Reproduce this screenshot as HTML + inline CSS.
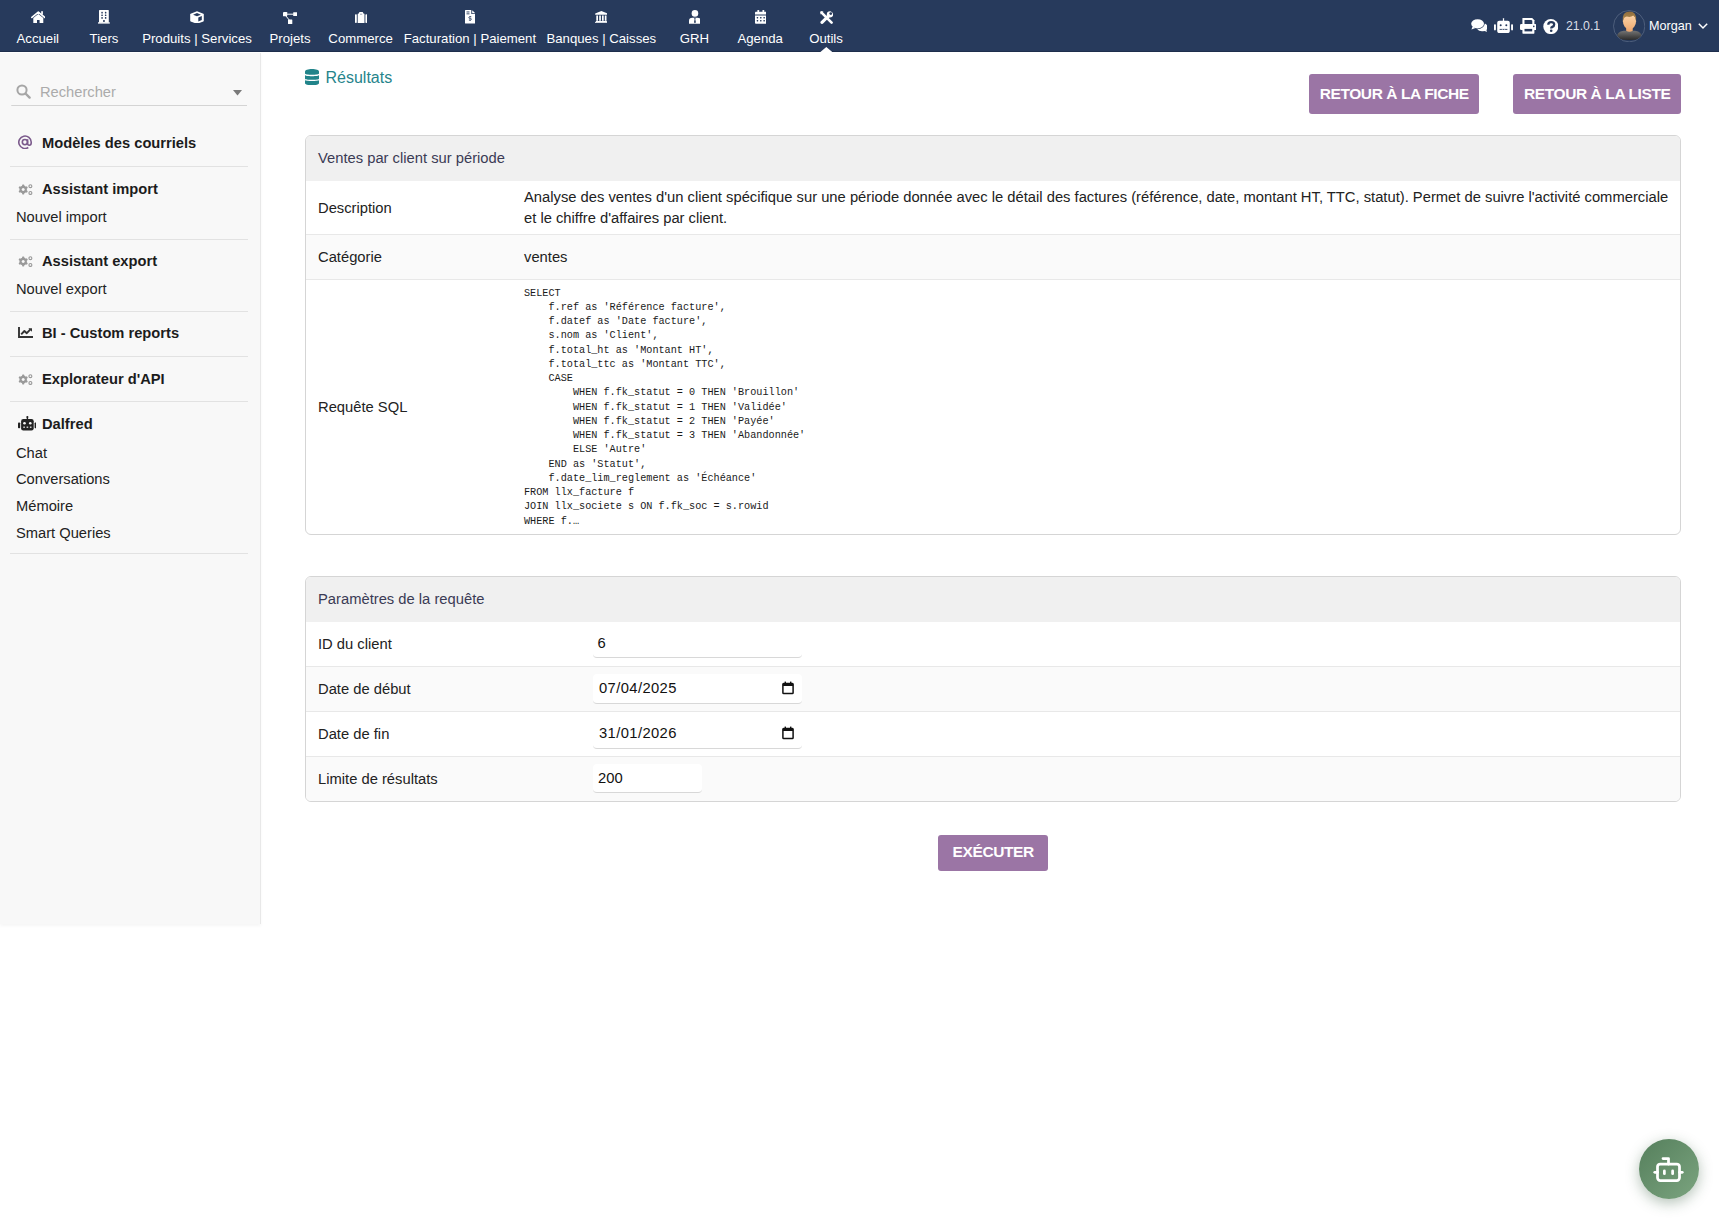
<!DOCTYPE html>
<html><head><meta charset="utf-8">
<style>
*{box-sizing:border-box;margin:0;padding:0}
html,body{width:1719px;height:1219px;overflow:hidden;background:#fff;font-family:"Liberation Sans",sans-serif;color:#222}
.abs{position:absolute}
#nav{position:absolute;left:0;top:0;width:1719px;height:52px;background:rgb(39,58,92);border-bottom:1px solid rgb(30,46,76)}
.nl{position:absolute;top:31px;transform:translateX(-50%);color:#fff;font-size:13.2px;white-space:nowrap;line-height:16px}
.mi{position:absolute;top:0;height:52px;color:#fff;font-size:13.2px;white-space:nowrap}
.mi .lb{position:absolute;top:31px;left:0;line-height:15px}
.mi svg{position:absolute;top:10px;fill:#fff}
#side{position:absolute;left:0;top:53px;width:261px;height:871px;background:#f8f8f8;border-right:1px solid #e8e8e8;box-shadow:0 2px 3px rgba(0,0,0,0.04)}
.sep{position:absolute;left:10px;width:238px;height:1px;background:#e2e2e2}
.st{position:absolute;left:42px;font-size:14.7px;font-weight:bold;color:#1c1c1c;white-space:nowrap;line-height:17px}
.ss{position:absolute;left:16px;font-size:14.7px;color:#222;white-space:nowrap;line-height:17px}
.tbl{position:absolute;left:305px;width:1376px;border:1px solid #d6d6d6;border-radius:6px;overflow:hidden}
.row{position:absolute;left:0;width:1374px;border-top:1px solid #e8e8e8}
.hd{position:absolute;left:0;top:0;width:1374px;background:#f0f0f0;color:#3b3b52;font-size:14.6px}
.txt{position:absolute;font-size:14.75px;white-space:nowrap;line-height:17px}
.btn{position:absolute;background:rgb(155,117,165);color:#fff;font-weight:bold;font-size:15.5px;letter-spacing:-0.4px;text-indent:0.4px;border-radius:3px;text-align:center;white-space:nowrap}
.inp{position:absolute;background:#fff;border-bottom:1px solid #d8d8d8;border-radius:4px}
pre{font-family:"Liberation Mono",monospace}
</style></head><body>
<div id="nav"><svg class="abs" style="left:30.8px;top:11px" width="14.6" height="12" viewBox="0 0 14.6 12"><polyline points="0.9,6.4 7.3,1.1 13.7,6.4" fill="none" stroke="#fff" stroke-width="1.7" stroke-linecap="round" stroke-linejoin="round"/><rect x="10.2" y="0.2" width="1.7" height="3.4" fill="#fff"/><path d="M2.3 7 L7.3 3 L12.3 7 V12 H8.6 V8.9 H6 V12 H2.3 Z" fill="#fff"/></svg><svg class="abs" style="left:98px;top:10.2px" width="11.8" height="13.6" viewBox="0 0 11.8 13.6"><rect x="1" y="0" width="9.8" height="12.8" rx="0.6" fill="#fff"/><rect x="0" y="12.3" width="11.8" height="1.3" fill="#fff"/><rect x="3.3" y="1.7" width="1.5" height="1.7" rx="0.5" fill="rgb(39,58,92)"/><rect x="3.3" y="4.4" width="1.5" height="1.7" rx="0.5" fill="rgb(39,58,92)"/><rect x="3.3" y="7.0" width="1.5" height="1.7" rx="0.5" fill="rgb(39,58,92)"/><rect x="6.9" y="1.7" width="1.5" height="1.7" rx="0.5" fill="rgb(39,58,92)"/><rect x="6.9" y="4.4" width="1.5" height="1.7" rx="0.5" fill="rgb(39,58,92)"/><rect x="6.9" y="7.0" width="1.5" height="1.7" rx="0.5" fill="rgb(39,58,92)"/><rect x="5.2" y="10" width="1.5" height="2" fill="rgb(39,58,92)"/></svg><svg class="abs" style="left:190.1px;top:10.6px" width="14" height="12.9" viewBox="0 0 14 12.9"><path d="M7 0.2 L13.4 2.8 Q13.8 3 13.8 3.4 V9.8 Q13.8 10.2 13.4 10.4 L7 12.9 L0.6 10.4 Q0.2 10.2 0.2 9.8 V3.4 Q0.2 3 0.6 2.8 Z" fill="#fff"/><path d="M7 2.1 L10.9 3.7 L7 5.3 L3.1 3.7 Z" fill="rgb(39,58,92)"/><path d="M8.3 6.6 L11.8 5.1 V9.1 L8.3 10.6 Z" fill="rgb(39,58,92)"/></svg><svg class="abs" style="left:283.1px;top:11.8px" width="14.4" height="11.9" viewBox="0 0 14.4 11.9"><rect x="0" y="0" width="4.2" height="4.2" rx="0.5" fill="#fff"/><rect x="10.2" y="0.3" width="4.2" height="3.7" rx="0.5" fill="#fff"/><rect x="5" y="7.5" width="4.3" height="4.4" rx="0.5" fill="#fff"/><path d="M3.5 2.2 H10.6 M2.6 3.6 L6.4 8.2" stroke="#fff" stroke-width="1"/></svg><svg class="abs" style="left:354.8px;top:11.9px" width="12.2" height="11" viewBox="0 0 12.2 11"><rect x="0" y="2.3" width="1.8" height="8.7" rx="0.7" fill="#fff"/><rect x="10.4" y="2.3" width="1.8" height="8.7" rx="0.7" fill="#fff"/><path d="M2.7 2.2 Q2.7 1.6 3.3 1.6 H4 V0.9 Q4 0 4.9 0 H7.3 Q8.2 0 8.2 0.9 V1.6 H8.9 Q9.5 1.6 9.5 2.2 V11 H2.7 Z" fill="#fff"/><rect x="5" y="1.8" width="2.2" height="0.7" fill="rgb(39,58,92)" opacity="0.6"/></svg><svg class="abs" style="left:464.7px;top:10.3px" width="10.4" height="13.6" viewBox="0 0 10.4 13.6"><path d="M0.6 0 H6.3 V4.1 H10.4 V13 Q10.4 13.6 9.8 13.6 H0.6 Q0 13.6 0 13 V0.6 Q0 0 0.6 0 Z" fill="#fff"/><path d="M7.2 0.3 L10.1 3.2 H7.2 Z" fill="#fff"/><rect x="1.5" y="1.5" width="3" height="0.9" fill="rgb(39,58,92)"/><rect x="1.5" y="3.4" width="3" height="0.9" fill="rgb(39,58,92)"/><path d="M6.3 6.8 H4.6 Q3.9 6.8 3.9 7.6 Q3.9 8.4 4.6 8.4 H5.6 Q6.3 8.4 6.3 9.2 Q6.3 10 5.6 10 H3.9 M5.1 6 V6.8 M5.1 10 V10.9" fill="none" stroke="rgb(39,58,92)" stroke-width="0.9"/></svg><svg class="abs" style="left:594.8px;top:10.9px" width="12.7" height="12.3" viewBox="0 0 12.7 12.3"><path d="M6.35 0 L12.5 2.5 V3.7 H0.2 V2.5 Z" fill="#fff"/><rect x="1.3" y="4.5" width="1.7" height="5.3" fill="#fff"/><rect x="4.2" y="4.5" width="1.7" height="5.3" fill="#fff"/><rect x="7.0" y="4.5" width="1.7" height="5.3" fill="#fff"/><rect x="9.8" y="4.5" width="1.7" height="5.3" fill="#fff"/><rect x="0.8" y="10" width="11.1" height="1" fill="#fff"/><rect x="0" y="11.2" width="12.7" height="1.1" fill="#fff"/></svg><svg class="abs" style="left:688.5px;top:10.1px" width="11.9" height="13.8" viewBox="0 0 11.9 13.8"><circle cx="5.95" cy="3.4" r="3.3" fill="#fff"/><path d="M0 13.8 V11 Q0 7.7 3.3 7.7 H8.6 Q11.9 7.7 11.9 11 V13.8 Z" fill="#fff"/><path d="M5.2 8.1 H6.7 L6.3 9.2 L6.9 12.3 L5.95 13.2 L5 12.3 L5.6 9.2 Z" fill="rgb(39,58,92)"/></svg><svg class="abs" style="left:754.6px;top:10.2px" width="11.6" height="13.7" viewBox="0 0 11.6 13.7"><rect x="2.4" y="0" width="1.7" height="2.8" rx="0.5" fill="#fff"/><rect x="7.5" y="0" width="1.7" height="2.8" rx="0.5" fill="#fff"/><path d="M0 2.6 Q0 1.7 0.9 1.7 H10.7 Q11.6 1.7 11.6 2.6 V4.6 H0 Z" fill="#fff"/><path d="M0 5.5 H11.6 V12.8 Q11.6 13.7 10.7 13.7 H0.9 Q0 13.7 0 12.8 Z" fill="#fff"/><rect x="1.7" y="6.9" width="1.5" height="1.5" rx="0.4" fill="rgb(39,58,92)"/><rect x="1.7" y="9.9" width="1.5" height="1.5" rx="0.4" fill="rgb(39,58,92)"/><rect x="5.05" y="6.9" width="1.5" height="1.5" rx="0.4" fill="rgb(39,58,92)"/><rect x="5.05" y="9.9" width="1.5" height="1.5" rx="0.4" fill="rgb(39,58,92)"/><rect x="8.4" y="6.9" width="1.5" height="1.5" rx="0.4" fill="rgb(39,58,92)"/><rect x="8.4" y="9.9" width="1.5" height="1.5" rx="0.4" fill="rgb(39,58,92)"/></svg><svg class="abs" style="left:819.8px;top:10.5px" width="13.3" height="13.4" viewBox="0 0 13.3 13.4"><path d="M1.6 1.6 L11.6 11.6" stroke="#fff" stroke-width="2.6" stroke-linecap="round"/><path d="M2 11.4 L8.6 4.8" stroke="#fff" stroke-width="3.1" stroke-linecap="round"/><circle cx="10" cy="3.4" r="3.2" fill="#fff"/><circle cx="10.8" cy="2.6" r="1.4" fill="rgb(39,58,92)"/><path d="M10.8 0 L13.5 0 L13.5 2.6 Z" fill="rgb(39,58,92)"/><path d="M0.5 0.3 L3.5 0.6 L0.6 3.4 Z" fill="#fff"/></svg><div class="abs nl" style="left:37.75px">Accueil</div><div class="abs nl" style="left:104px">Tiers</div><div class="abs nl" style="left:197px">Produits | Services</div><div class="abs nl" style="left:290px">Projets</div><div class="abs nl" style="left:360.6px">Commerce</div><div class="abs nl" style="left:469.9px">Facturation | Paiement</div><div class="abs nl" style="left:601.3px">Banques | Caisses</div><div class="abs nl" style="left:694.4px">GRH</div><div class="abs nl" style="left:760.2px">Agenda</div><div class="abs nl" style="left:826px">Outils</div><svg class="abs" style="left:819.7px;top:46.8px" width="12.6" height="5.3" viewBox="0 0 12.6 5.3"><path d="M0 5.3 L6.3 0 L12.6 5.3 Z" fill="#fff"/></svg>
<svg class="abs" style="left:1470.8px;top:18.7px" width="16.6" height="13" viewBox="0 0 16.6 13"><ellipse cx="6.6" cy="4.8" rx="6.4" ry="4.6" fill="#fff"/><path d="M1.6 7.5 L0.4 10.4 L4.6 8.9 Z" fill="#fff"/><path d="M13.9 4.6 Q16.6 5.8 16.6 8.2 Q16.6 9.8 15.3 10.9 L16.4 13 L13.2 12 Q12.2 12.3 11 12.3 Q7.8 12.3 6.2 10.2 Q12.9 9.9 13.9 4.6 Z" fill="#fff"/></svg>
<svg class="abs" style="left:1494px;top:18.2px" width="19" height="15.1" viewBox="0 0 19 15.1"><path d="M8.8 3.2 L9 0.4 Q9.5 -0.2 10 0.4 L10.2 3.2 Z" fill="#fff"/><rect x="3.2" y="2.8" width="12.6" height="12.3" rx="2" fill="#fff"/><rect x="0" y="6.2" width="1.9" height="6.2" rx="0.8" fill="#fff"/><rect x="17.1" y="6.2" width="1.9" height="6.2" rx="0.8" fill="#fff"/><circle cx="6.7" cy="7.2" r="1.0" fill="rgb(39,58,92)"/><circle cx="12.3" cy="7.2" r="1.0" fill="rgb(39,58,92)"/><rect x="5.6" y="10.9" width="7.8" height="0.9" fill="rgb(39,58,92)"/><rect x="7.9" y="10.7" width="0.6" height="1.3" fill="#fff"/><rect x="10.5" y="10.7" width="0.6" height="1.3" fill="#fff"/></svg>
<svg class="abs" style="left:1519.5px;top:18.3px" width="16.5" height="15.7" viewBox="0 0 16.5 15.7"><path d="M3 0 H12.2 L14.4 2.2 V6.4 H2.4 V0.6 Q2.4 0 3 0 Z" fill="#fff"/><path d="M4.5 1.9 H11.4 L12.3 2.8 V6.4 H4.5 Z" fill="rgb(39,58,92)"/><rect x="0" y="6.1" width="16.5" height="6" rx="1.3" fill="#fff"/><rect x="2.4" y="10.4" width="12" height="5.3" rx="0.6" fill="#fff"/><rect x="4.5" y="10.9" width="7.7" height="2.5" fill="rgb(39,58,92)"/><circle cx="13.8" cy="8.4" r="0.8" fill="rgb(39,58,92)"/></svg>
<svg class="abs" style="left:1542.8px;top:18.7px" width="15.7" height="15.1" viewBox="0 0 15.7 15.1"><circle cx="7.85" cy="7.55" r="7.55" fill="#fff"/><path d="M5.3 5.7 Q5.3 3.1 8.2 3.1 Q11.2 3.1 11.2 5.5 Q11.2 7.1 9.4 7.9 Q8.2 8.5 8.2 9.5" fill="none" stroke="rgb(39,58,92)" stroke-width="2.3"/><circle cx="8.2" cy="11.7" r="1.3" fill="rgb(39,58,92)"/></svg>
<div class="abs" style="left:1566px;top:19px;font-size:12.3px;line-height:14px;color:#dcdfe6;white-space:nowrap">21.0.1</div>
<svg class="abs" style="left:1612.5px;top:9.8px" width="32.4" height="32.4" viewBox="0 0 32 32"><defs><linearGradient id="sk" x1="0" y1="0" x2="0" y2="1"><stop offset="0" stop-color="#fdd8ad"/><stop offset="1" stop-color="#efad76"/></linearGradient><linearGradient id="sh" x1="0" y1="0" x2="0" y2="1"><stop offset="0" stop-color="#747474"/><stop offset="1" stop-color="#2c2c2c"/></linearGradient><linearGradient id="hr" x1="0" y1="0" x2="0" y2="1"><stop offset="0" stop-color="#8f6d3c"/><stop offset="1" stop-color="#b48d52"/></linearGradient><clipPath id="cc"><circle cx="16" cy="16" r="15.2"/></clipPath></defs><circle cx="16" cy="16" r="15.5" fill="rgb(39,58,92)" stroke="#5f6e89" stroke-width="0.7"/><g clip-path="url(#cc)"><path d="M3.8 27.5 Q3.6 21.2 10.5 20.4 H21.8 Q28.7 21.2 28.5 27.5 Q27 29.6 16 29.6 Q5 29.6 3.8 27.5 Z" fill="url(#sh)"/><path d="M13 15 H19.5 V20.6 Q16.2 22.4 13 20.6 Z" fill="#eda972"/><ellipse cx="16.3" cy="11.2" rx="6.5" ry="8" fill="url(#sk)"/><path d="M9.6 11.6 Q8.6 1.6 16.2 1.5 Q23.6 1.6 22.8 10.5 Q22 6.5 20 5.4 Q17.4 7.6 13.6 6.4 Q10.4 7 9.6 11.6 Z" fill="url(#hr)"/></g></svg>
<div class="abs" style="left:1649px;top:19px;font-size:12.6px;line-height:14px;color:#fff;white-space:nowrap">Morgan</div>
<svg class="abs" style="left:1697.9px;top:23.2px" width="10" height="6.4" viewBox="0 0 10 6.4"><path d="M0.8 0.8 L5 5 L9.2 0.8" fill="none" stroke="#fff" stroke-width="1.5"/></svg>
</div>
<div id="side"></div>
<div class="abs" style="left:11px;top:104.6px;width:236px;height:1.2px;background:#d4d4d4;border-radius:0 0 0 3px"></div>
<svg class="abs" style="left:15.9px;top:84px" width="15" height="15" viewBox="0 0 15 15"><circle cx="6" cy="6" r="4.6" fill="none" stroke="#a6a6a6" stroke-width="2"/><path d="M9.5 9.5 L13.6 13.6" stroke="#a6a6a6" stroke-width="2.4" stroke-linecap="round"/></svg>
<div class="ss" style="left:40px;top:84.3px;color:#ababab">Rechercher</div>
<svg class="abs" style="left:232.5px;top:90px" width="9" height="5.5" viewBox="0 0 9 5.5"><path d="M0 0 H9 L4.5 5.5 Z" fill="#7a7a7a"/></svg>
<svg class="abs" style="left:18.3px;top:135.3px" width="14" height="14.2" viewBox="0 0 14 14.2"><g fill="none" stroke="#7b5a8c" stroke-width="1.6"><path d="M10.3 12.5 A6.2 6.2 0 1 1 13.2 7.1 V8 Q13.2 10.2 11.3 10.2 Q9.6 10.2 9.6 8.2 V4.2"/><circle cx="6.9" cy="7.1" r="2.6"/></g></svg>
<div class="st" style="top:134.9px">Modèles des courriels</div>
<div class="sep" style="top:166px"></div>
<svg class="abs" style="left:17.7px;top:184px" width="15.1" height="11" viewBox="0 0 15.1 11"><g fill="#9a9a9a"><circle cx="5.2" cy="5.5" r="3.7"/><rect x="4.1" y="0.6" width="2.2" height="9.8" rx="0.7" transform="rotate(0 5.2 5.5)"/><rect x="4.1" y="0.6" width="2.2" height="9.8" rx="0.7" transform="rotate(60 5.2 5.5)"/><rect x="4.1" y="0.6" width="2.2" height="9.8" rx="0.7" transform="rotate(120 5.2 5.5)"/></g><circle cx="5.2" cy="5.5" r="1.5" fill="#f8f8f8"/><circle cx="12.4" cy="2.2" r="1.45" fill="none" stroke="#9a9a9a" stroke-width="1.15"/><circle cx="12.4" cy="9.0" r="1.45" fill="none" stroke="#9a9a9a" stroke-width="1.15"/></svg>
<div class="st" style="top:181.4px">Assistant import</div>
<div class="ss" style="top:209.0px">Nouvel import</div>
<div class="sep" style="top:238.5px"></div>
<svg class="abs" style="left:17.7px;top:256px" width="15.1" height="11" viewBox="0 0 15.1 11"><g fill="#9a9a9a"><circle cx="5.2" cy="5.5" r="3.7"/><rect x="4.1" y="0.6" width="2.2" height="9.8" rx="0.7" transform="rotate(0 5.2 5.5)"/><rect x="4.1" y="0.6" width="2.2" height="9.8" rx="0.7" transform="rotate(60 5.2 5.5)"/><rect x="4.1" y="0.6" width="2.2" height="9.8" rx="0.7" transform="rotate(120 5.2 5.5)"/></g><circle cx="5.2" cy="5.5" r="1.5" fill="#f8f8f8"/><circle cx="12.4" cy="2.2" r="1.45" fill="none" stroke="#9a9a9a" stroke-width="1.15"/><circle cx="12.4" cy="9.0" r="1.45" fill="none" stroke="#9a9a9a" stroke-width="1.15"/></svg>
<div class="st" style="top:253.4px">Assistant export</div>
<div class="ss" style="top:281.0px">Nouvel export</div>
<div class="sep" style="top:310.5px"></div>
<svg class="abs" style="left:17.7px;top:326.8px" width="15.1" height="11" viewBox="0 0 15.1 11"><path d="M1 0 V10 H15.1" fill="none" stroke="#333" stroke-width="1.9"/><path d="M3.2 7.4 L6.4 4 L8.8 6.2 L12.6 2.2" fill="none" stroke="#333" stroke-width="1.9" stroke-linejoin="round"/><path d="M10.4 1.2 H14 V4.8 Z" fill="#333"/></svg>
<div class="st" style="top:325.1px">BI - Custom reports</div>
<div class="sep" style="top:356.3px"></div>
<svg class="abs" style="left:17.7px;top:373.5px" width="15.1" height="11" viewBox="0 0 15.1 11"><g fill="#9a9a9a"><circle cx="5.2" cy="5.5" r="3.7"/><rect x="4.1" y="0.6" width="2.2" height="9.8" rx="0.7" transform="rotate(0 5.2 5.5)"/><rect x="4.1" y="0.6" width="2.2" height="9.8" rx="0.7" transform="rotate(60 5.2 5.5)"/><rect x="4.1" y="0.6" width="2.2" height="9.8" rx="0.7" transform="rotate(120 5.2 5.5)"/></g><circle cx="5.2" cy="5.5" r="1.5" fill="#f8f8f8"/><circle cx="12.4" cy="2.2" r="1.45" fill="none" stroke="#9a9a9a" stroke-width="1.15"/><circle cx="12.4" cy="9.0" r="1.45" fill="none" stroke="#9a9a9a" stroke-width="1.15"/></svg>
<div class="st" style="top:371.2px">Explorateur d'API</div>
<div class="sep" style="top:401px"></div>
<svg class="abs" style="left:17.7px;top:416.3px" width="18.8" height="14.4" viewBox="0 0 18.8 14.4"><rect x="8.7" y="0.6" width="1.4" height="3" fill="#222"/><circle cx="9.4" cy="1" r="1" fill="#222"/><rect x="3.1" y="3" width="12.6" height="11.4" rx="2.2" fill="#222"/><rect x="0" y="6.4" width="2.2" height="5.8" rx="0.8" fill="#222"/><rect x="16.6" y="6.4" width="2.2" height="5.8" rx="0.8" fill="#222"/><circle cx="6.5" cy="7.2" r="1.3" fill="#f8f8f8"/><circle cx="12.3" cy="7.2" r="1.3" fill="#f8f8f8"/><rect x="5.3" y="10.6" width="1.6" height="1.2" fill="#f8f8f8"/><rect x="8.6" y="10.6" width="1.6" height="1.2" fill="#f8f8f8"/><rect x="11.9" y="10.6" width="1.6" height="1.2" fill="#f8f8f8"/></svg>
<div class="st" style="top:415.9px">Dalfred</div>
<div class="ss" style="top:444.7px">Chat</div>
<div class="ss" style="top:471.3px">Conversations</div>
<div class="ss" style="top:497.8px">Mémoire</div>
<div class="ss" style="top:524.9px">Smart Queries</div>
<div class="sep" style="top:553.3px"></div>

<svg class="abs" style="left:305px;top:68.7px" width="14" height="16.25" viewBox="0 0 14 16.25"><g fill="rgb(33,132,138)"><path d="M0 2.4 C0 1 3 0 7 0 C11 0 14 1 14 2.4 V4.5 C14 5.3 11 5.8 7 5.8 C3 5.8 0 5.3 0 4.5 Z"/><path d="M0 6.0 C0 6.8 3 7.2 7 7.2 C11 7.2 14 6.8 14 6.0 V9.7 C14 10.4 11 10.75 7 10.75 C3 10.75 0 10.4 0 9.7 Z"/><path d="M0 11 C0 11.7 3 12 7 12 C11 12 14 11.7 14 11 V14.2 C14 15.5 11 16.25 7 16.25 C3 16.25 0 15.5 0 14.2 Z"/></g></svg>
<div class="txt" style="left:325.5px;top:68.5px;font-size:16px;color:rgb(38,132,139)">Résultats</div>
<div class="btn" style="left:1309px;top:74px;width:170px;height:40px;line-height:39px">RETOUR À LA FICHE</div>
<div class="btn" style="left:1513px;top:74px;width:168px;height:40px;line-height:39px">RETOUR À LA LISTE</div>

<div class="abs" style="left:305px;top:135px;width:1376px;height:400px;border:1px solid #d5d5d5;border-radius:6px;overflow:hidden;background:#fff">
  <div class="abs" style="left:0;top:0;width:1374px;height:45px;background:#f0f0f0"></div>
  <div class="abs" style="left:0;top:98px;width:1374px;height:46px;background:#fafafa;border-top:1px solid #e8e8e8;border-bottom:1px solid #e8e8e8"></div>
</div>
<div class="txt" style="left:318px;top:150.3px;color:#3b3b55">Ventes par client sur période</div>
<div class="txt" style="left:318px;top:200.0px">Description</div>
<div class="abs" style="left:524px;top:187px;width:1150px;font-size:14.75px;line-height:21.2px;color:#222">Analyse des ventes d'un client spécifique sur une période donnée avec le détail des factures (référence, date, montant HT, TTC, statut). Permet de suivre l'activité commerciale<br>et le chiffre d'affaires par client.</div>
<div class="txt" style="left:318px;top:248.5px">Catégorie</div>
<div class="txt" style="left:524px;top:248.6px">ventes</div>
<div class="txt" style="left:318px;top:398.6px">Requête SQL</div>
<pre class="abs" style="left:524px;top:286.5px;font-size:10.2px;line-height:14.25px;color:#1a1a1a">SELECT
    f.ref as 'Référence facture',
    f.datef as 'Date facture',
    s.nom as 'Client',
    f.total_ht as 'Montant HT',
    f.total_ttc as 'Montant TTC',
    CASE
        WHEN f.fk_statut = 0 THEN 'Brouillon'
        WHEN f.fk_statut = 1 THEN 'Validée'
        WHEN f.fk_statut = 2 THEN 'Payée'
        WHEN f.fk_statut = 3 THEN 'Abandonnée'
        ELSE 'Autre'
    END as 'Statut',
    f.date_lim_reglement as 'Échéance'
FROM llx_facture f
JOIN llx_societe s ON f.fk_soc = s.rowid
WHERE f.…</pre>

<div class="abs" style="left:305px;top:576px;width:1376px;height:226px;border:1px solid #d5d5d5;border-radius:6px;overflow:hidden;background:#fff">
  <div class="abs" style="left:0;top:0;width:1374px;height:45px;background:#f0f0f0"></div>
  <div class="abs" style="left:0;top:89px;width:1374px;height:46px;background:#fafafa;border-top:1px solid #e8e8e8;border-bottom:1px solid #e8e8e8"></div>
  <div class="abs" style="left:0;top:179px;width:1374px;height:46px;background:#fafafa;border-top:1px solid #e8e8e8"></div>
</div>
<div class="txt" style="left:318px;top:590.8px;color:#3b3b55">Paramètres de la requête</div>
<div class="txt" style="left:318px;top:636.3px">ID du client</div>
<div class="txt" style="left:318px;top:681.3px">Date de début</div>
<div class="txt" style="left:318px;top:726.3px">Date de fin</div>
<div class="txt" style="left:318px;top:771.3px">Limite de résultats</div>
<div class="inp" style="left:593px;top:628px;width:209px;height:30px"></div>
<div class="inp" style="left:593px;top:674px;width:209px;height:30px"></div>
<div class="inp" style="left:593px;top:719px;width:209px;height:30px"></div>
<div class="inp" style="left:593px;top:764px;width:109px;height:29px"></div>
<div class="txt" style="left:597.5px;top:635.2px;color:#111">6</div>
<div class="txt" style="letter-spacing:0.4px;left:599px;top:680.2px;color:#111">07/04/2025</div>
<div class="txt" style="letter-spacing:0.4px;left:599px;top:724.8px;color:#111">31/01/2026</div>
<div class="txt" style="left:598px;top:769.5px;color:#111">200</div>
<svg class="abs" style="left:782.3px;top:681.3px" width="12" height="13.4" viewBox="0 0 12 13.4"><rect x="0.9" y="2.4" width="10.2" height="10.1" rx="0.8" fill="none" stroke="#111" stroke-width="1.5"/><rect x="0.9" y="2.4" width="10.2" height="2.6" fill="#111"/><rect x="2.6" y="0.6" width="1.4" height="2.5" fill="#111"/><rect x="8" y="0.6" width="1.4" height="2.5" fill="#111"/></svg>
<svg class="abs" style="left:782.3px;top:726.3px" width="12" height="13.4" viewBox="0 0 12 13.4"><rect x="0.9" y="2.4" width="10.2" height="10.1" rx="0.8" fill="none" stroke="#111" stroke-width="1.5"/><rect x="0.9" y="2.4" width="10.2" height="2.6" fill="#111"/><rect x="2.6" y="0.6" width="1.4" height="2.5" fill="#111"/><rect x="8" y="0.6" width="1.4" height="2.5" fill="#111"/></svg>
<div class="btn" style="left:938px;top:835px;width:110px;height:36px;line-height:33px">EXÉCUTER</div>

<div class="abs" style="left:1639px;top:1139px;width:60px;height:60px;border-radius:50%;background:linear-gradient(135deg,#557f5c,#7ba47f);box-shadow:0 4px 14px rgba(40,80,50,0.35)"></div>
<svg class="abs" style="left:1652.1px;top:1153.3px" width="33" height="33" viewBox="0 0 24 24" fill="none" stroke="#fff" stroke-width="2" stroke-linecap="round" stroke-linejoin="round"><path d="M12 8V4H8"/><rect width="16" height="12" x="4" y="8" rx="2"/><path d="M2 14h2"/><path d="M20 14h2"/><path d="M15 13v2"/><path d="M9 13v2"/></svg>
</body></html>
